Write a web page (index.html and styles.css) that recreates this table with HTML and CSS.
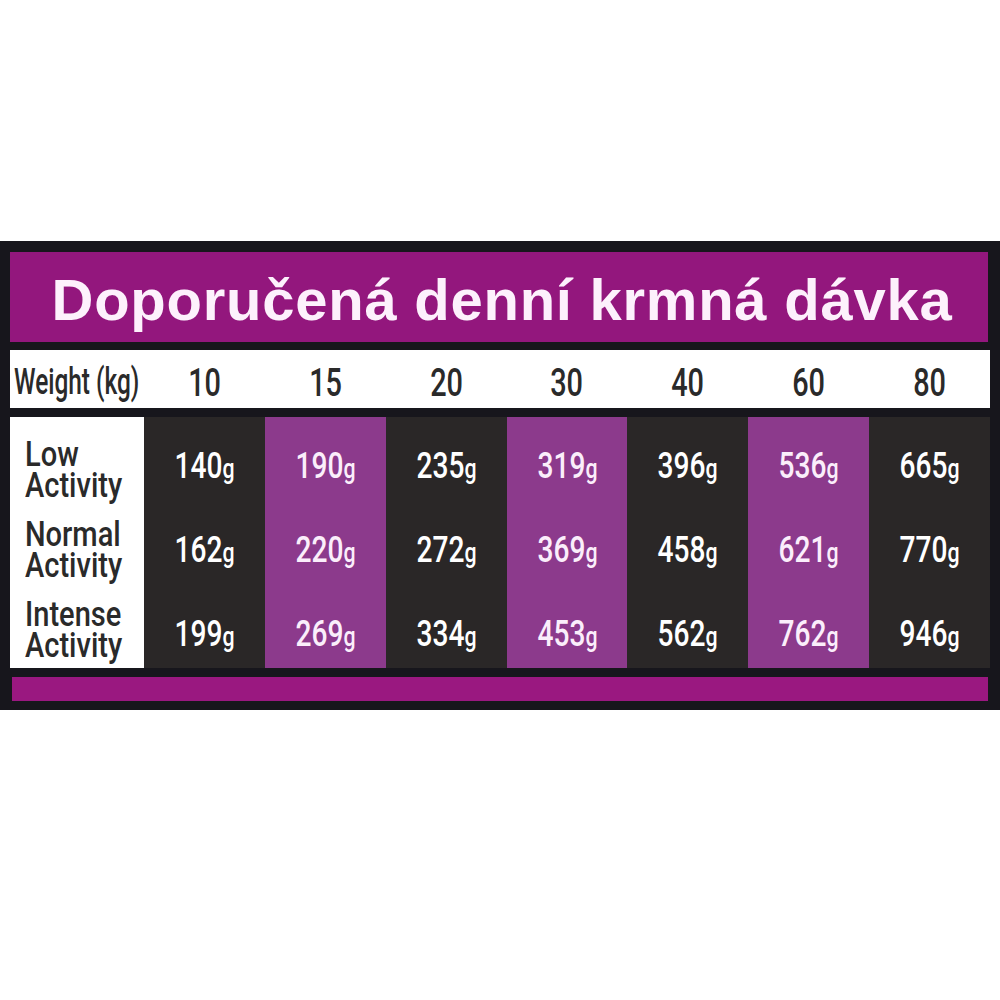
FILE: index.html
```html
<!DOCTYPE html>
<html lang="cs">
<head>
<meta charset="utf-8">
<title>Doporučená denní krmná dávka</title>
<link rel="stylesheet" href="styles.css">
</head>
<body>
<div class="frame">
  <div class="title"><span>Doporučená denní krmná dávka</span></div>
  <div class="weights">
    <div class="wlabel"><span>Weight (kg)</span></div>
    <div class="wnum"><span>10</span></div>
    <div class="wnum"><span>15</span></div>
    <div class="wnum"><span>20</span></div>
    <div class="wnum"><span>30</span></div>
    <div class="wnum"><span>40</span></div>
    <div class="wnum"><span>60</span></div>
    <div class="wnum"><span>80</span></div>
  </div>
  <div class="table">
    <div class="labels">
      <div class="label"><span>Low<br>Activity</span></div>
      <div class="label"><span>Normal<br>Activity</span></div>
      <div class="label"><span>Intense<br>Activity</span></div>
    </div>
    <div class="col dark">
      <div class="val"><span>140<small>g</small></span></div>
      <div class="val"><span>162<small>g</small></span></div>
      <div class="val"><span>199<small>g</small></span></div>
    </div>
    <div class="col purple">
      <div class="val"><span>190<small>g</small></span></div>
      <div class="val"><span>220<small>g</small></span></div>
      <div class="val"><span>269<small>g</small></span></div>
    </div>
    <div class="col dark">
      <div class="val"><span>235<small>g</small></span></div>
      <div class="val"><span>272<small>g</small></span></div>
      <div class="val"><span>334<small>g</small></span></div>
    </div>
    <div class="col purple">
      <div class="val"><span>319<small>g</small></span></div>
      <div class="val"><span>369<small>g</small></span></div>
      <div class="val"><span>453<small>g</small></span></div>
    </div>
    <div class="col dark">
      <div class="val"><span>396<small>g</small></span></div>
      <div class="val"><span>458<small>g</small></span></div>
      <div class="val"><span>562<small>g</small></span></div>
    </div>
    <div class="col purple">
      <div class="val"><span>536<small>g</small></span></div>
      <div class="val"><span>621<small>g</small></span></div>
      <div class="val"><span>762<small>g</small></span></div>
    </div>
    <div class="col dark">
      <div class="val"><span>665<small>g</small></span></div>
      <div class="val"><span>770<small>g</small></span></div>
      <div class="val"><span>946<small>g</small></span></div>
    </div>
  </div>
  <div class="bottom"></div>
</div>
</body>
</html>
```
FILE: styles.css
```css
html, body {
  margin: 0;
  padding: 0;
  background: #ffffff;
}

.frame {
  margin-top: 241px;
  width: 1000px;
  height: 469px;
  box-sizing: border-box;
  padding: 11px 10px 9px 10px;
  background: #17161c;
  display: flex;
  flex-direction: column;
}

.title {
  flex: none;
  height: 90px;
  box-sizing: border-box;
  margin-right: 2px;
  padding-top: 6px;
  background: #93177d;
  text-align: center;
  font-family: "Liberation Sans", Arial, sans-serif;
  font-weight: bold;
  font-size: 58px;
  line-height: 84px;
  letter-spacing: 0.75px;
  color: #fdf1fc;
  white-space: nowrap;
}

.title span {
  display: inline-block;
  margin-left: 6px;
}

.weights {
  flex: none;
  margin-top: 8px;
  height: 58px;
  background: #ffffff;
  display: grid;
  grid-template-columns: 134px repeat(7, 1fr);
  font-family: Roboto, "Noto Sans", sans-serif;
  font-weight: 500;
  color: #2a2a2a;
}

.wlabel {
  display: flex;
  align-items: center;
  padding-left: 4px;
  padding-top: 6px;
  font-size: 37px;
  line-height: 40px;
}

.wlabel span {
  display: inline-block;
  transform: scaleX(0.66);
  transform-origin: left center;
  white-space: nowrap;
}

.wnum {
  display: flex;
  align-items: center;
  justify-content: center;
  padding-top: 8px;
  font-size: 38px;
  line-height: 40px;
}

.wnum span {
  display: inline-block;
  transform: scaleX(0.76);
}

.table {
  flex: none;
  margin-top: 9px;
  height: 251px;
  display: grid;
  grid-template-columns: 134px repeat(7, 1fr);
  grid-template-rows: 251px;
  font-family: Roboto, "Noto Sans", sans-serif;
  font-weight: 500;
}

.labels {
  background: #ffffff;
  color: #2a2a2a;
  display: flex;
  flex-direction: column;
  gap: 18px;
  padding-top: 22px;
  padding-left: 15px;
  overflow: hidden;
}

.label {
  font-size: 35px;
  line-height: 31px;
  height: 62px;
  white-space: nowrap;
}

.label span {
  display: inline-block;
  transform: scaleX(0.83);
  transform-origin: left top;
}

.col {
  display: flex;
  flex-direction: column;
  padding-top: 7px;
  overflow: hidden;
}

.col.dark {
  background: #2a2727;
  color: #ffffff;
}

.col.purple {
  background: #8c3a8c;
  color: #fbeefb;
}

.val {
  flex: none;
  height: 84px;
  line-height: 84px;
  font-size: 37px;
  text-align: center;
  white-space: nowrap;
}

.val span {
  display: inline-block;
  transform: scaleX(0.76);
}

.val small {
  font-size: 28px;
}

.bottom {
  flex: none;
  margin-top: 9px;
  margin-left: 2px;
  margin-right: 2px;
  height: 24px;
  background: #9a1880;
}
```
